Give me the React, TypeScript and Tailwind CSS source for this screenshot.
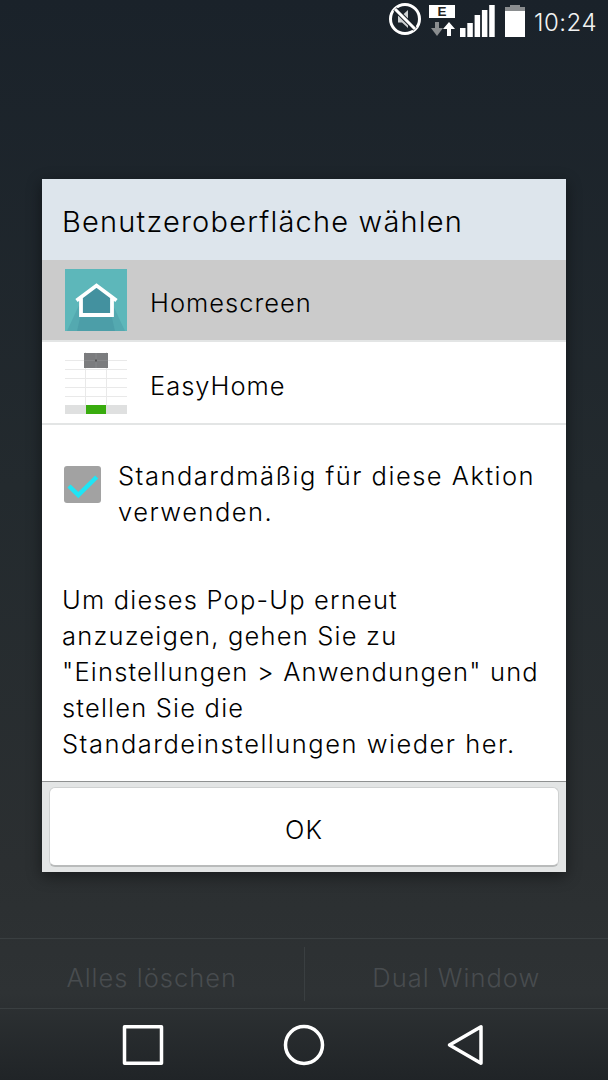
const font = { fontFamily: '"Inter", "Noto Sans", sans-serif' };

function StatusBar() {
  return (
    <div className="h-[44px] flex items-start justify-end pr-[11px] text-white">
      <svg width="34" height="44" viewBox="0 0 34 44" className="mr-[6px]" fill="none">
        <circle cx="16" cy="19" r="14.500" stroke="white" strokeWidth="3" />
        <path d="M9 15.500h4l6-5.500v18l-6-5.500h-4z" fill="#cfd2d4" />
        <path d="M6 9 26 29" stroke="#1b2127" strokeWidth="5" />
        <path d="M6 9 26 29" stroke="white" strokeWidth="3" />
      </svg>
      <svg width="28" height="44" viewBox="0 0 28 44" className="mr-[3px]">
        <rect x="0" y="5" width="26" height="13" fill="white" />
        <text x="13" y="16" textAnchor="middle" fontSize="13.500" fontWeight="700" fill="#222" fontFamily="Liberation Sans">E</text>
        <path d="M5 22h4v6h4l-6 8-6-8h4z" fill="#8a8d8f" transform="translate(1 0)" />
        <path d="M20 22l6 7h-4v7h-4v-7h-4z" fill="white" />
      </svg>
      <svg width="35" height="44" viewBox="0 0 35 44" className="mr-[10px]" fill="white">
        <rect x="0" y="28" width="5.500" height="9" />
        <rect x="7.300" y="23" width="5.500" height="14" />
        <rect x="14.600" y="15" width="5.500" height="22" />
        <rect x="21.900" y="10" width="5.500" height="27" />
        <rect x="29.200" y="5" width="5.500" height="32" />
      </svg>
      <svg width="20" height="44" viewBox="0 0 20 44" className="mr-[9px]">
        <rect x="5" y="5" width="10" height="3" fill="#8a8d8f" />
        <rect x="0" y="7" width="20" height="4" fill="#8a8d8f" />
        <rect x="0" y="11" width="20" height="26" fill="white" />
      </svg>
      <span className="mt-[11px] text-[24px] tracking-[0.500px] leading-[24px] text-[#f2f3f3] font-light">10:24</span>
    </div>
  );
}

function HomeIcon() {
  return (
    <svg width="62" height="62" viewBox="0 0 62 62" className="block">
      <rect width="62" height="62" fill="#5db7ba" />
      <path d="M2 62 16 32h30l14 30z" fill="#54a9b0" />
      <path d="M12 62 17 40h28l5 22z" fill="#4c9ea8" />
      <path d="M16 30 31.500 18 47 30V46H16z" fill="#43919f" />
      <path d="M11.500 31.500 31.500 16.500 51.500 31.500M16 28.500V46H47V28.500" fill="none" stroke="white" strokeWidth="3.800" />
    </svg>
  );
}

function EasyIcon() {
  return (
    <svg width="62" height="62" viewBox="0 0 62 62" className="block">
      <rect width="62" height="62" fill="white" />
      <path d="M0 8.500H62M0 17.500H62M0 26.500H62M0 35.500H62M0 44.500H62M20.500 0V53M41.500 0V53" stroke="#e9e9e9" strokeWidth="1" />
      <rect x="19" y="1" width="24" height="15" fill="#7b7c7e" />
      <path d="M31 1v15M19 8.500h24" stroke="#868789" strokeWidth="1" />
      <rect x="30" y="7.500" width="2" height="2" fill="#555" />
      <rect x="0" y="53" width="62" height="9" fill="#dfe0e0" />
      <rect x="21" y="53" width="20" height="9" fill="#39ac0e" />
    </svg>
  );
}

function Row({ icon, label, active }: { icon: React.ReactNode; label: string; active?: boolean }) {
  return (
    <div className={`flex items-center pl-[23px] border-b-2 border-[#e3e5e5] ${active ? "h-[82px] bg-[#cbcbcb]" : "h-[83px] bg-white pt-[1px]"}`}>
      {icon}
      <span className="ml-[23px] pt-[7px] text-[25.500px] tracking-[1px] font-light text-black">{label}</span>
    </div>
  );
}

export default function App() {
  return (
    <div className="w-[608px] h-[1080px] overflow-hidden flex flex-col bg-[linear-gradient(180deg,#1a222a_0%,#232a2e_45%,#2b2f31_80%,#2e3234_92%,#202427_100%)]" style={font}>
      <StatusBar />
      <div className="mt-[135px] mx-[42px] w-[524px] h-[693px] flex flex-col bg-white shadow-[0_4px_14px_rgba(0,0,0,0.45)]">
        <div className="h-[81px] shrink-0 bg-[#dde5ec] flex items-center pl-[20px] pt-[5px] text-[29px] tracking-[1.200px] font-light text-black">
          Benutzeroberfläche wählen
        </div>
        <Row active icon={<HomeIcon />} label="Homescreen" />
        <Row icon={<EasyIcon />} label="EasyHome" />
        <div className="flex pl-[22px] pr-[20px] pt-[32px]">
          <div className="w-[37px] h-[37px] mt-[9px] shrink-0 rounded-[3px] bg-[#a2a2a2]">
            <svg width="37" height="37" viewBox="0 0 37 37" fill="none" className="block">
              <path d="M5 20 14.300 29 32.700 11" stroke="#1fe5f5" strokeWidth="4.500" />
            </svg>
          </div>
          <p className="ml-[17px] mt-[1px] text-[25.500px] tracking-[1.500px] font-light leading-[36px] text-black">
            Standardmäßig für diese Aktion verwenden.
          </p>
        </div>
        <p className="mt-[52px] pl-[20px] pr-[10px] text-[25.500px] tracking-[1.200px] font-light leading-[36px] text-black">
          Um dieses Pop-Up erneut
          <br />
          anzuzeigen, gehen Sie zu
          <br />
          "Einstellungen &gt; Anwendungen" und
          <br />
          stellen Sie die
          <br />
          <span className="tracking-[1.500px]">Standardeinstellungen wieder her.</span>
        </p>
        <div className="mt-auto h-[91px] shrink-0 border-t border-t-[#8f9191] bg-[#e3e5e5] px-[7px] pt-[5px] pb-[5px]">
          <div className="h-full rounded-[6px] bg-white border border-b-2 border-[#cfd1d1] border-b-[#b9bbbb] flex items-center justify-center pt-[7px] text-[25.500px] tracking-[1px] font-light text-black">
            OK
          </div>
        </div>
      </div>
      <div className="mt-[66px] h-[71px] flex items-center border-y border-[#3a3f41] text-[25.500px] tracking-[1px] font-light text-[#484c4f]">
        <div className="flex-1 text-center pt-[9px]">Alles löschen</div>
        <div className="w-px h-[54px] bg-[#3a3f41]" />
        <div className="flex-1 text-center pt-[9px]">Dual Window</div>
      </div>
      <div className="flex-1">
        <svg width="608" height="71" viewBox="0 0 608 71" fill="none" stroke="white" strokeWidth="3.500" className="block">
          <rect x="124.500" y="17.750" width="37" height="36.500" strokeLinejoin="round" />
          <ellipse cx="304" cy="36" rx="18.500" ry="18.500" />
          <path d="M449.500 36 481 17.750V54.250z" strokeLinejoin="round" />
        </svg>
      </div>
    </div>
  );
}
